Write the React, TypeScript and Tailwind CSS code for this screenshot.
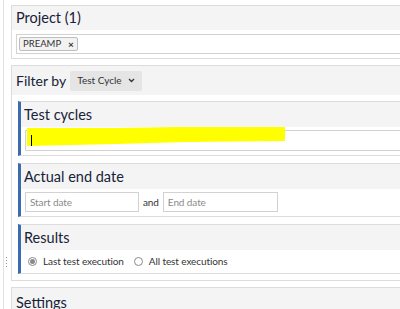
import React from "react";

function Chevron() {
  return (
    <svg width="7" height="5" viewBox="0 0 7 5" fill="none" aria-hidden="true">
      <path d="M1 1l2.5 2.5L6 1" stroke="#333" strokeWidth="1.3" />
    </svg>
  );
}

function SubCard({ title, children }: { title: string; children: React.ReactNode }) {
  return (
    <div className="border border-[#dcdcdc] border-l-[3px] border-l-[#3b6cb0]">
      <div className="h-[25px] bg-[#f4f4f4] pl-[3px] text-[14.5px] leading-[25px] text-[#172238]">{title}</div>
      {children}
    </div>
  );
}

function Radio({ checked, label }: { checked?: boolean; label: string }) {
  return (
    <label className="flex items-center gap-[6px]">
      <span className="flex h-[9px] w-[9px] items-center justify-center rounded-full border border-[#8a8a8a] bg-white">
        {checked && <span className="h-[5px] w-[5px] rounded-full bg-[#8a8a8a]" />}
      </span>
      <span>{label}</span>
    </label>
  );
}

export default function App() {
  return (
    <div
      className="flex h-[309px] w-[400px] overflow-hidden bg-white"
      style={{ fontFamily: 'Lato, "Noto Sans", sans-serif' }}
    >
      {/* Gutter */}
      <div className="w-[4px] shrink-0 border-r border-[#e2e2e2]" />
      <div className="flex w-[7px] shrink-0 flex-col items-center pt-[257px]">
        <div className="flex flex-col gap-[2px] pr-[2px]">
          <span className="h-[1px] w-[1px] bg-[#999]" />
          <span className="h-[1px] w-[1px] bg-[#999]" />
          <span className="h-[1px] w-[1px] bg-[#999]" />
          <span className="h-[1px] w-[1px] bg-[#999]" />
        </div>
      </div>

      {/* Main */}
      <div className="flex w-[480px] shrink-0 flex-col gap-[6px] pt-[5px]">
        {/* Project */}
        <div className="border border-[#dcdcdc]">
          <div className="h-[24px] bg-[#f4f4f4] pl-[4px] text-[14.5px] leading-[24px] text-[#172238]">Project (1)</div>
          <div className="px-[4px] pb-[4px] pt-[4px]">
            <div className="flex h-[20px] items-center border border-r-0 border-[#d2d2d2] pl-[2px]">
              <span className="flex h-[14px] items-center gap-[7px] rounded-[2px] border border-[#bdbdbd] bg-[#f2f2f2] px-[3px] text-[9.5px] text-[#333]">
                PREAMP <span className="text-[10px] font-bold leading-none">×</span>
              </span>
            </div>
          </div>
        </div>

        {/* Filter by */}
        <div className="border border-[#dcdcdc] pb-[6px]">
          <div className="flex h-[29px] items-center gap-[4px] bg-[#f4f4f4] pl-[4px]">
            <span className="text-[14px] text-[#172238]">Filter by</span>
            <span className="flex h-[20px] items-center gap-[6px] rounded-[2px] bg-[#e5e5e5] px-[7px] text-[10px] text-[#333]">
              Test Cycle <Chevron />
            </span>
          </div>
          <div className="flex flex-col gap-[7px] pl-[6px] pt-[6px]">
            <SubCard title="Test cycles">
              <div className="px-[4px] pb-[4px] pt-[3px]">
                <div className="relative h-[21px] border border-r-0 border-[#d2d2d2] bg-white">
                  <svg
                    className="absolute left-[1px] top-[-4px]"
                    width="260"
                    height="20"
                    viewBox="0 0 260 20"
                    aria-hidden="true"
                  >
                    <polygon points="0,1 90,1 150,0 258,0 258,14 160,15 90,17 0,19" fill="#ffff00" />
                  </svg>
                  <span className="absolute left-[5px] top-[4px] h-[11px] w-[1px] bg-black" />
                </div>
              </div>
            </SubCard>

            <SubCard title="Actual end date">
              <div className="flex items-center gap-[4px] px-[4px] pb-[4px] pt-[3px] text-[10px] tracking-[-0.1px]">
                <div className="flex h-[20px] w-[114px] items-center border border-[#d2d2d2] pl-[4px] text-[#8a8a8a]">
                  Start date
                </div>
                <span className="text-[#333]">and</span>
                <div className="flex h-[20px] w-[115px] items-center border border-[#d2d2d2] pl-[4px] text-[#8a8a8a]">
                  End date
                </div>
              </div>
            </SubCard>

            <SubCard title="Results">
              <div className="flex h-[23px] items-center gap-[10px] pl-[7px] text-[10px] tracking-[-0.1px] text-[#333]">
                <Radio checked label="Last test execution" />
                <Radio label="All test executions" />
              </div>
            </SubCard>
          </div>
        </div>

        {/* Settings */}
        <div className="border border-[#dcdcdc]">
          <div className="h-[29px] bg-[#f4f4f4] pl-[4px] text-[14.5px] leading-[29px] text-[#172238]">Settings</div>
        </div>
      </div>
    </div>
  );
}
